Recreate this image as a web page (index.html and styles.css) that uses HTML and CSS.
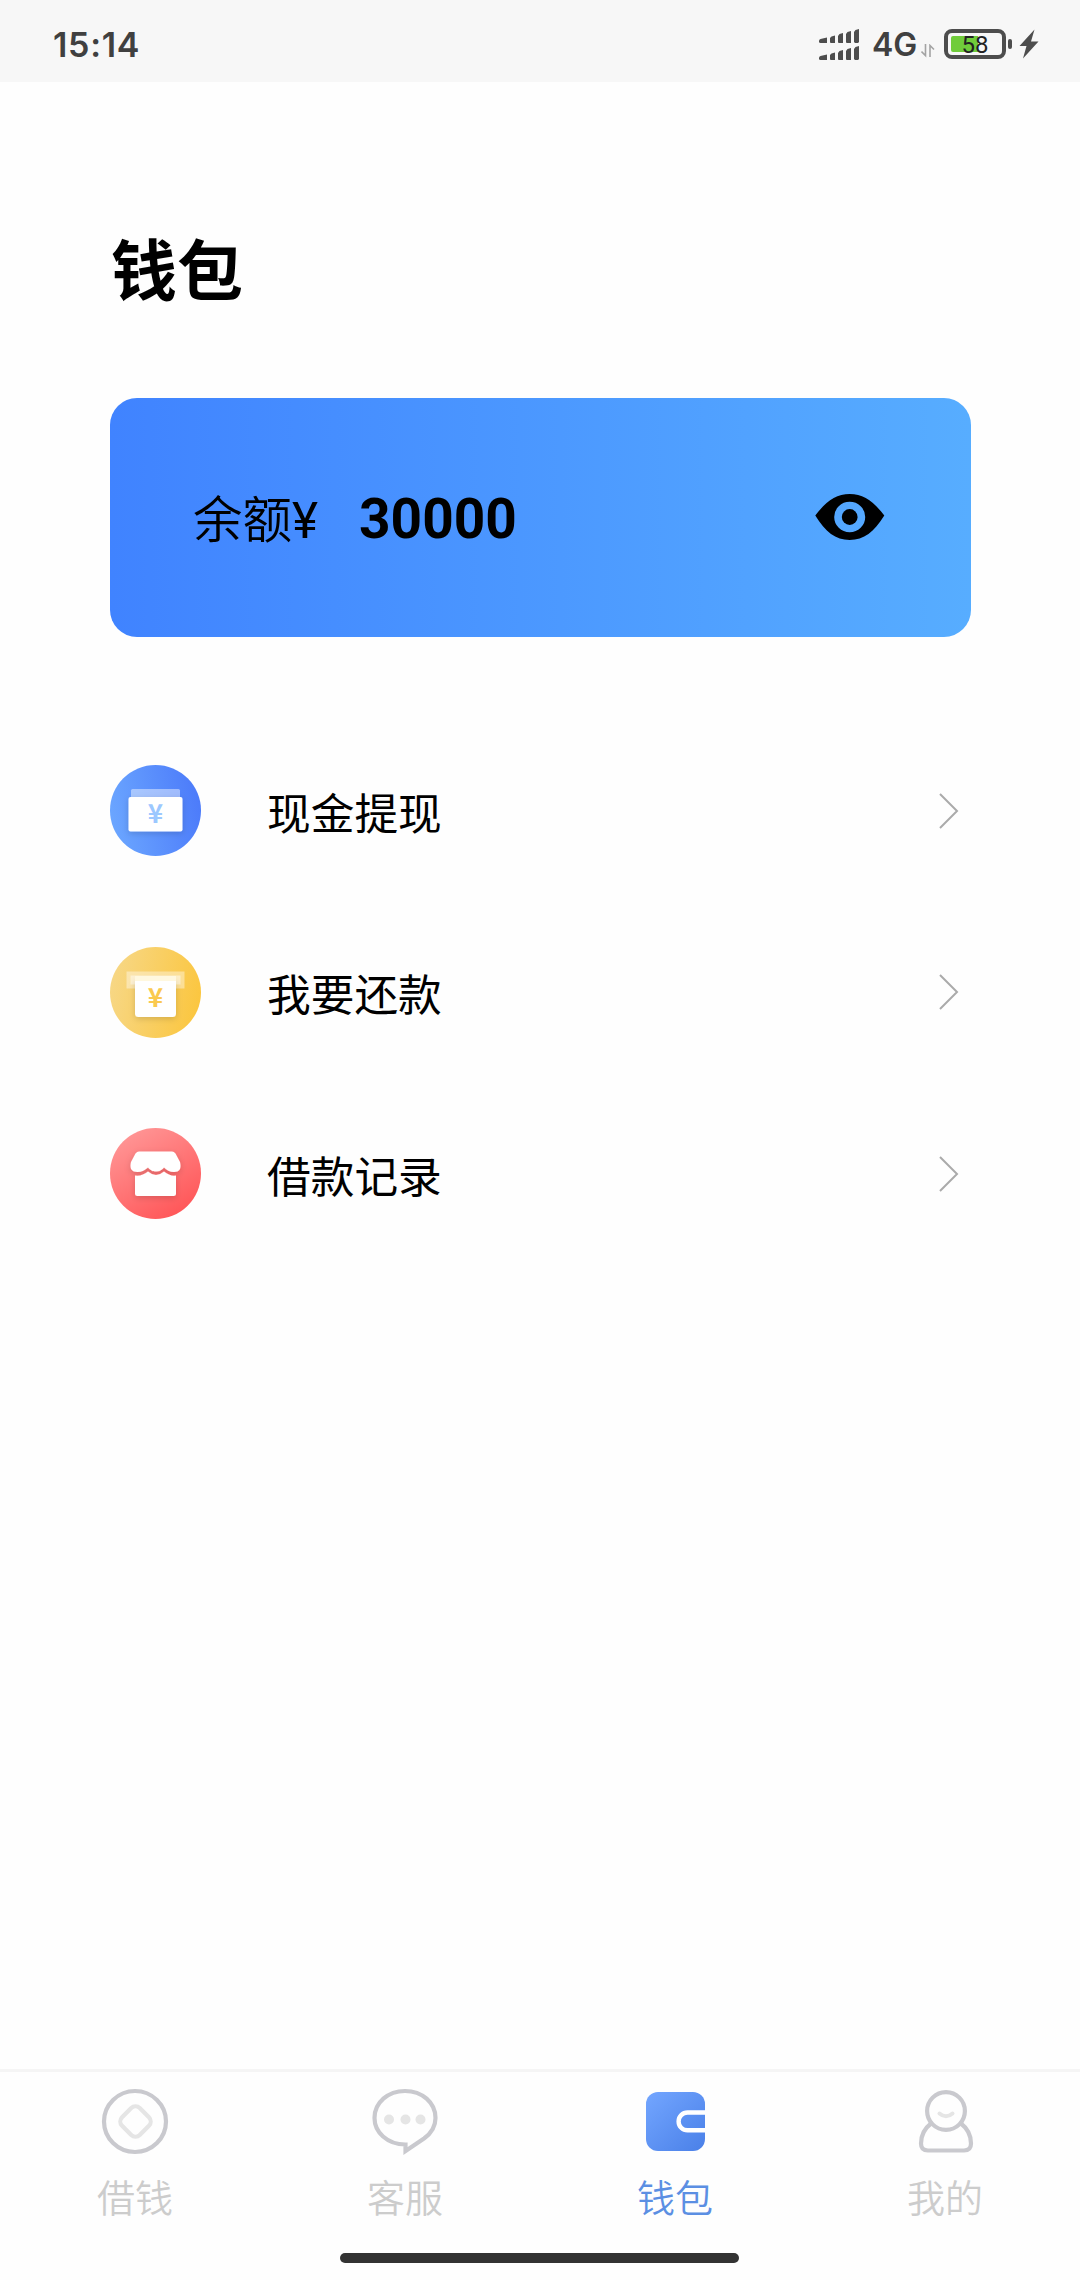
FILE: index.html
```html
<!DOCTYPE html>
<html lang="zh-CN">

<head>
    <meta charset="UTF-8">
    <title>钱包</title>
    <link rel="stylesheet" href="styles.css">
</head>

<body>
    <header class="status">
        <span class="time">15:14</span>
        <div class="status-right">
            <svg class="signal" width="42" height="34" viewBox="0 0 42 34" fill="#4d4d4d">
                <path d="M0 12 Q0 10.500 1.500 10 L8 8.500 V14 H1.500 Q0 14 0 12.500Z" />
                <path d="M11 9 L12.500 7.500 L16 6.500 V14 H12 Q11 14 11 13Z" />
                <path d="M19 7 L20.500 5 L24 4 V14 H20 Q19 14 19 13Z" />
                <path d="M27 5 L28.500 3 L32 2 V14 H28 Q27 14 27 13Z" />
                <path d="M35 3 L36.500 1 L40 0 V13 L39 14 H36 L35 13Z" />
                <path d="M0 29 Q0 27.500 1.500 27 L8 25.500 V31 H1.500 Q0 31 0 29.500Z" />
                <path d="M11 26 L12.500 24.500 L16 23.500 V31 H12 Q11 31 11 30Z" />
                <path d="M19 24 L20.500 22 L24 21 V31 H20 Q19 31 19 30Z" />
                <path d="M27 22 L28.500 20 L32 19 V31 H28 Q27 31 27 30Z" />
                <path d="M35 20 L36.500 18 L40 17 V30 L39 31 H36 L35 30Z" />
            </svg>
            <span class="net">4G</span>
            <svg class="arrows" width="14" height="14" viewBox="0 0 14 14" fill="none" stroke="#a3a3a3" stroke-width="1.600">
                <path d="M4.500 0V11.500L0.500 7.500M9 13V1.500L13 5.500" />
            </svg>
            <div class="battery"><span>58</span></div>
            <i class="battery-tip"></i>
            <svg class="bolt" width="20" height="30" viewBox="0 0 20 30" fill="#4d4d4d">
                <path d="M15.500 0.500 L0.500 17 H7.500 L4 29.500 L19.500 12.500 H12Z" />
            </svg>
        </div>
    </header>

    <main>
        <h1>钱包</h1>

        <section class="card">
            <span class="label">余额<b>¥</b></span>
            <strong class="amount">30000</strong>
            <svg class="eye" width="70" height="46" viewBox="0 0 70 46">
                <path fill-rule="evenodd" d="M0.300 21.500 C11 7.500 21 0 34.700 0 C48.500 0 58.500 7.500 69.300 21.500 C59 38 49 46 34.700 46 C20.500 46 10.500 38 0.300 21.500Z M34.700 7.700 A15.500 15.300 0 1 0 34.700 38.300 A15.500 15.300 0 1 0 34.700 7.700Z" />
                <circle cx="34.700" cy="23" r="7.900" />
            </svg>
        </section>

        <ul class="menu">
            <li>
                <svg class="ikon" viewBox="0 0 91 91">
                    <defs>
                        <linearGradient id="blue" x1="0" y1="0.600" x2="1" y2="0.400">
                            <stop offset="0" stop-color="#6ba6ff" />
                            <stop offset="1" stop-color="#4c7bfa" />
                        </linearGradient>
                        <filter id="shadow" x="-30%" y="-30%" width="160%" height="160%">
                            <feDropShadow dx="0" dy="2" stdDeviation="3" flood-color="#000" flood-opacity="0.150" />
                        </filter>
                    </defs>
                    <circle cx="45.500" cy="45.500" r="45.500" fill="url(#blue)" />
                    <rect x="21" y="24" width="49" height="12" rx="1.500" fill="#fff" opacity="0.450" />
                    <rect x="18.500" y="32" width="54" height="34.500" rx="2" fill="#fff" filter="url(#shadow)" />
                    <text x="45.500" y="58" class="yen yen-blue">¥</text>
                </svg>
                <span>现金提现</span>
                <svg class="pil" viewBox="0 0 20 36"><path d="M1 1L18 18L1 35" /></svg>
            </li>
            <li>
                <svg class="ikon" viewBox="0 0 91 91">
                    <defs>
                        <linearGradient id="yellow" x1="0" y1="0.400" x2="1" y2="0.600">
                            <stop offset="0" stop-color="#f7d785" />
                            <stop offset="1" stop-color="#fbc63f" />
                        </linearGradient>
                    </defs>
                    <circle cx="45.500" cy="45.500" r="45.500" fill="url(#yellow)" />
                    <rect x="16.500" y="24.500" width="58" height="17" fill="#fff" opacity="0.400" />
                    <rect x="20.500" y="28.500" width="50" height="9" fill="#fff" opacity="0.450" />
                    <path d="M25 33H66V66.500Q66 70 62.500 70H28.500Q25 70 25 66.500Z" fill="#fff" filter="url(#shadow)" />
                    <rect x="25" y="29" width="41" height="5" fill="#fff8df" />
                    <text x="45.500" y="60" class="yen yen-yellow">¥</text>
                </svg>
                <span>我要还款</span>
                <svg class="pil" viewBox="0 0 20 36"><path d="M1 1L18 18L1 35" /></svg>
            </li>
            <li>
                <svg class="ikon" viewBox="0 0 91 91">
                    <defs>
                        <linearGradient id="red" x1="0.150" y1="0.100" x2="0.700" y2="1">
                            <stop offset="0" stop-color="#ff9494" />
                            <stop offset="1" stop-color="#ff5658" />
                        </linearGradient>
                    </defs>
                    <circle cx="45.500" cy="45.500" r="45.500" fill="url(#red)" />
                    <g fill="#fff" filter="url(#shadow)">
                        <path d="M29 23.500H62Q64 23.500 65.500 25.500L70 34Q72.500 44 64 44C59.500 44 56.500 42 54 39.500C51 43 49 43.500 46 43.500C43 43.500 41 43 38 39.500C35 42 32 44 27.500 44Q18.500 44 21 34L25.500 25.500Q27 23.500 29 23.500Z" />
                        <path d="M25 47.500Q32 48.500 38 43.500Q42 47 46 47Q50 47 54 43.500Q60 48.500 66 47.500V65.500Q66 68 63.500 68H27.500Q25 68 25 65.500Z" />
                    </g>
                </svg>
                <span>借款记录</span>
                <svg class="pil" viewBox="0 0 20 36"><path d="M1 1L18 18L1 35" /></svg>
            </li>
        </ul>
    </main>

    <nav>
        <a>
            <svg viewBox="0 0 72 72" fill="none">
                <ellipse cx="36" cy="36.500" rx="31" ry="30.500" stroke="#c9c9ce" stroke-width="4.200" />
                <rect x="24" y="24" width="25" height="25" rx="6" transform="rotate(45 36.500 36.500)" stroke="#e5e5e5" stroke-width="4.200" />
            </svg>
            <span>借钱</span>
        </a>
        <a>
            <svg viewBox="0 0 72 72" fill="none">
                <path d="M36 6C53 6 66.500 17.500 66.500 33C66.500 43 62 48.500 55 53.500L36.500 66V59.500C18 59.500 5.500 47 5.500 33C5.500 17.500 19 6 36 6Z" stroke="#c9c9ce" stroke-width="4.200" />
                <g fill="#e5e5e5">
                    <circle cx="20" cy="34.500" r="5" />
                    <circle cx="36.500" cy="34.500" r="5" />
                    <circle cx="51.500" cy="34.500" r="5" />
                </g>
            </svg>
            <span>客服</span>
        </a>
        <a class="valgt">
            <svg viewBox="0 0 72 72" fill="none">
                <defs>
                    <linearGradient id="wallet" x1="0" y1="0" x2="1" y2="1">
                        <stop offset="0" stop-color="#73a6ff" />
                        <stop offset="1" stop-color="#4a80e8" />
                    </linearGradient>
                </defs>
                <rect x="7" y="7" width="59" height="59" rx="12" fill="url(#wallet)" />
                <path d="M66 27.500H48.500A8.900 8.900 0 0 0 48.500 45.300H66" stroke="#fff" stroke-width="4.400" />
            </svg>
            <span>钱包</span>
        </a>
        <a>
            <svg viewBox="0 0 72 72" fill="none">
                <circle cx="37" cy="26" r="18.900" stroke="#c9c9ce" stroke-width="4.200" />
                <path d="M22 38.500C15.500 43.500 12 51 12 58.500Q12 65.500 19 65.500H55Q62 65.500 62 58.500C62 51 58.500 43.500 52 38.500" stroke="#c9c9ce" stroke-width="4.200" />
                <path d="M30.500 28.500Q37 34 43.500 28.500" stroke="#e5e5e5" stroke-width="4" stroke-linecap="round" />
            </svg>
            <span>我的</span>
        </a>
    </nav>
    <div class="home"></div>
</body>

</html>
```
FILE: styles.css
```css
* {
    box-sizing: border-box;
}

body {
    display: flex;
    flex-direction: column;
    height: 2280px;
    margin: 0;
    background: #fefefe;
    color: black;
    font-family: Roboto, "Noto Sans CJK SC", sans-serif;
}

svg {
    display: block;
    flex: none;
}

.status {
    display: flex;
    justify-content: space-between;
    height: 82px;
    padding: 0 41px 0 53px;
    background: #f7f7f7;
    color: #404040;
    font-family: Inter, sans-serif;
    font-weight: 600;
}

.time {
    padding-top: 24px;
    font-size: 34px;
    letter-spacing: 0.7px;
    line-height: 42px;
}

.status-right {
    display: flex;
    align-items: flex-start;
}

.signal {
    margin-top: 29px;
}

.net {
    width: 47px;
    margin: 24px 0 0 11px;
    font-size: 32px;
    line-height: 42px;
}

.arrows {
    margin: 44px 9px 0 2px;
}

.battery {
    width: 62px;
    height: 30px;
    margin-top: 29px;
    border: 4px solid #4d4d4d;
    border-radius: 8px;
    padding: 3px;
}

.battery span {
    display: block;
    height: 16px;
    border-radius: 2px;
    background: linear-gradient(to right, #70cc3b 27px, transparent 27px);
    color: #222;
    font-family: Roboto, sans-serif;
    font-size: 24px;
    font-weight: normal;
    line-height: 18px;
    text-align: center;
}

.battery-tip {
    width: 4px;
    height: 10px;
    margin: 39px 7px 0 2px;
    border-radius: 2px;
    background: #4d4d4d;
}

.bolt {
    margin-top: 29px;
}

main {
    flex: 1;
    padding: 143px 109px 0 110px;
}

h1 {
    margin: 0 0 0 1px;
    font-size: 66px;
    line-height: 96px;
}

.card {
    display: flex;
    align-items: center;
    height: 239px;
    margin-top: 77px;
    padding: 0 86px 0 83px;
    border-radius: 27px;
    background: linear-gradient(to right, #4083ff, #57adff);
}

.label {
    padding-bottom: 2px;
    font-size: 49.5px;
    font-weight: 350;
}

.label b {
    font-weight: 400;
}

.amount {
    margin-left: 41px;
    padding-top: 2px;
    font-size: 55px;
}

.eye {
    margin: 0 0 2px auto;
}

.menu {
    display: grid;
    gap: 90.5px;
    margin: 128px 0 0;
    padding: 0 12px 0 0;
    list-style: none;
}

.menu li {
    display: flex;
    align-items: center;
    height: 91px;
    font-size: 43.7px;
}

.menu span {
    margin-left: 66px;
}

.ikon {
    width: 91px;
    height: 91px;
}

.yen {
    font-family: "Noto Sans CJK SC", sans-serif;
    font-size: 26px;
    font-weight: bold;
    text-anchor: middle;
}

.yen-blue {
    fill: #9cc8ff;
}

.yen-yellow {
    fill: #fac94f;
}

.pil {
    width: 20px;
    height: 36px;
    margin-left: auto;
    fill: none;
    stroke: #aaa;
    stroke-width: 2;
}

nav {
    display: grid;
    grid-template-columns: repeat(4, 1fr);
    height: 184px;
    padding-top: 13px;
    border-top: 3px solid #f5f5f5;
}

nav a {
    display: flex;
    flex-direction: column;
    align-items: center;
    color: #ccc;
    font-size: 38px;
    font-weight: 350;
    line-height: 56px;
}

nav svg {
    width: 72px;
    height: 72px;
}

nav span {
    margin-top: 14px;
}

nav .valgt {
    color: #5b8fe3;
}

.home {
    width: 399px;
    height: 10px;
    margin: 0 341px 17px 340px;
    border-radius: 5px;
    background: #333;
}
```
